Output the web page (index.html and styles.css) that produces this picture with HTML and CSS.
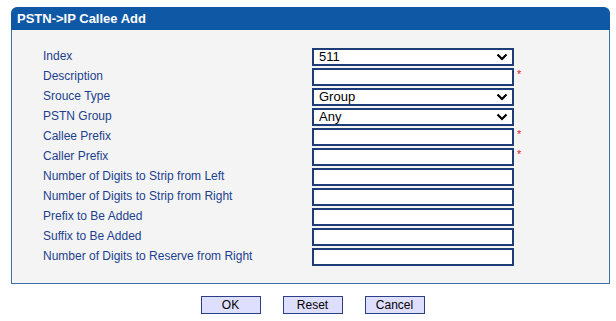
FILE: index.html
```html
<!DOCTYPE html>
<html lang="en">
<head>
<meta charset="UTF-8">
<title>PSTN->IP Callee Add</title>
<link rel="stylesheet" href="styles.css">
</head>
<body>
<form id="callee-form">
    <div class="panel">
        <div class="panel-title">PSTN-&gt;IP Callee Add</div>
        <div class="panel-body">
            <div class="row">
                <label>Index</label>
                <select><option>511</option></select>
            </div>
            <div class="row">
                <label>Description</label>
                <input type="text"><span class="req">*</span>
            </div>
            <div class="row">
                <label>Srouce Type</label>
                <select><option>Group</option></select>
            </div>
            <div class="row">
                <label>PSTN Group</label>
                <select><option>Any</option></select>
            </div>
            <div class="row">
                <label>Callee Prefix</label>
                <input type="text"><span class="req">*</span>
            </div>
            <div class="row">
                <label>Caller Prefix</label>
                <input type="text"><span class="req">*</span>
            </div>
            <div class="row">
                <label>Number of Digits to Strip from Left</label>
                <input type="text">
            </div>
            <div class="row">
                <label>Number of Digits to Strip from Right</label>
                <input type="text">
            </div>
            <div class="row">
                <label>Prefix to Be Added</label>
                <input type="text">
            </div>
            <div class="row">
                <label>Suffix to Be Added</label>
                <input type="text">
            </div>
            <div class="row">
                <label>Number of Digits to Reserve from Right</label>
                <input type="text">
            </div>
        </div>
    </div>
    <div class="buttons">
        <button type="button">OK</button>
        <button type="reset">Reset</button>
        <button type="button">Cancel</button>
    </div>
</form>
</body>
</html>
```

FILE: styles.css
```css
body {
    font-family: "Liberation Sans", Arial, sans-serif;
    font-size: 12px;
    background-color: #fff;
    margin: 0;
    padding: 7px 6px 0 11px;
}

.panel {
    width: 599px;
}

.panel-title {
    background-color: #0f58a6;
    color: #fff;
    font-weight: bold;
    font-size: 13px;
    height: 23px;
    line-height: 24px;
    padding-left: 6px;
    border-radius: 6px 6px 0 0;
    box-sizing: border-box;
}

.panel-body {
    background-color: #f4f4f4;
    border: 1px solid #3f6fae;
    border-top: none;
    padding: 17px 0 16px 31px;
}

.row {
    display: flex;
    align-items: center;
    height: 20px;
}

.row label {
    width: 269px;
    color: #1c3f8f;
    line-height: 16px;
    padding-bottom: 2px;
}

.row input,
.row select {
    width: 202px;
    height: 18px;
    margin: 0;
    box-sizing: border-box;
    border: 2px solid #1d3c78;
    background-color: #fff;
    font-family: "Liberation Sans", Arial, sans-serif;
    font-size: 13px;
    color: #000;
    padding: 0 4px;
    border-radius: 0;
}

.row select {
    appearance: none;
    padding: 0 0 0 5px;
    background-image: url("data:image/svg+xml;utf8,<svg xmlns='http://www.w3.org/2000/svg' width='12' height='8'><path d='M1.5 1.5 L6 6 L10.5 1.5' fill='none' stroke='black' stroke-width='2.2'/></svg>");
    background-repeat: no-repeat;
    background-position: right 4px center;
    line-height: 14px;
}

.req {
    color: #e0202a;
    font-size: 11px;
    margin-left: 3px;
    align-self: flex-start;
    margin-top: 1px;
}

.buttons {
    display: flex;
    justify-content: center;
    gap: 22px;
    margin-top: 12px;
    width: 599px;
    padding-left: 2px;
}

button {
    width: 60px;
    height: 18px;
    background-color: #dedeff;
    border: 1px solid #2c3f86;
    font-family: "Liberation Sans", Arial, sans-serif;
    font-size: 12px;
    color: #000;
    padding: 0;
    border-radius: 0;
}
```
